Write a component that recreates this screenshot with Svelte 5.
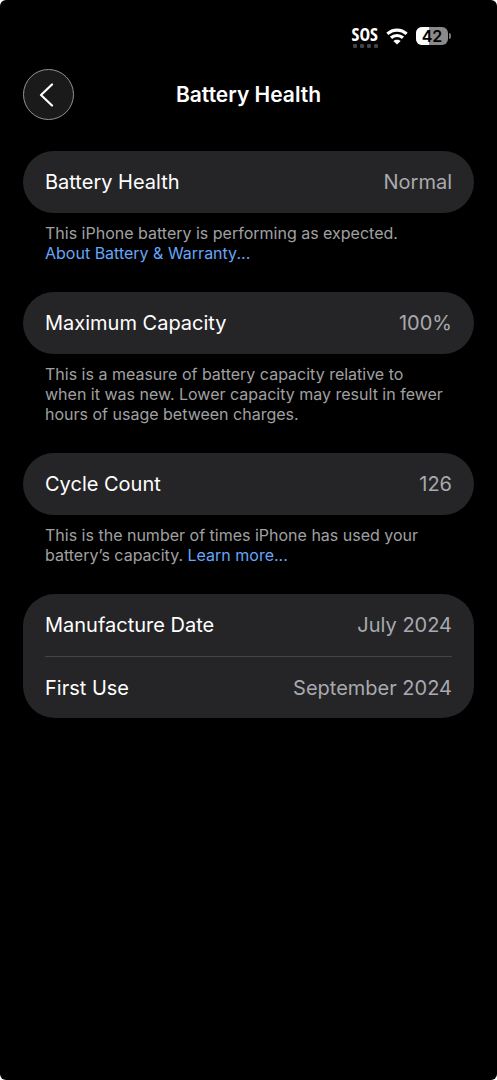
<script>
    let sections = [
        {
            rows: [{ label: "Battery Health", value: "Normal" }],
            note: ["This iPhone battery is performing as expected."],
            link: "About Battery & Warranty...",
            linkOnNewLine: true
        },
        {
            rows: [{ label: "Maximum Capacity", value: "100%" }],
            note: [
                "This is a measure of battery capacity relative to",
                "when it was new. Lower capacity may result in fewer",
                "hours of usage between charges."
            ]
        },
        {
            rows: [{ label: "Cycle Count", value: "126" }],
            note: [
                "This is the number of times iPhone has used your",
                "battery’s capacity."
            ],
            link: "Learn more..."
        },
        {
            rows: [
                { label: "Manufacture Date", value: "July 2024" },
                { label: "First Use", value: "September 2024" }
            ]
        }
    ];

    let batteryLevel = 42;
</script>

<div class="screen">
    <div class="status-bar">
        <div class="sos">
            <span>SOS</span>
            <svg width="26" height="4" viewBox="0 0 26 4" aria-hidden="true">
                {#each [0, 1, 2, 3] as dot}
                    <rect x={1 + dot * 7} y="0" width="4" height="4" rx="1.2" fill="#444" />
                {/each}
            </svg>
        </div>
        <svg class="wifi" width="22" height="17" viewBox="0 0 22 17" aria-label="Wi-Fi">
            <path d="M1.4 5.9C6.8.8 15.2.8 20.6 5.9" />
            <path d="M5 9.8C8.4 6.7 13.6 6.7 17 9.8" />
            <path class="wifi-dot" d="M11 16.6L7.3 13C9.3 11.2 12.7 11.2 14.7 13Z" />
        </svg>
        <div class="battery">
            <div class="battery-body">
                <div class="battery-fill" style="width: {batteryLevel}%"></div>
                <span>{batteryLevel}</span>
            </div>
            <div class="battery-tip"></div>
        </div>
    </div>

    <header>
        <button class="back" aria-label="Back">
            <svg width="16" height="24" viewBox="0 0 16 24">
                <path d="M13 1.5L2 12L13 22.5" />
            </svg>
        </button>
        <h1>Battery Health</h1>
    </header>

    <main>
        {#each sections as section}
            <section>
                <dl class="card">
                    {#each section.rows as row}
                        <div class="row">
                            <dt>{row.label}</dt>
                            <dd>{row.value}</dd>
                        </div>
                    {/each}
                </dl>
                {#if section.note}
                    <p>
                        {#each section.note as line, i}
                            {#if i > 0}<br />{/if}
                            {line}
                        {/each}
                        {#if section.link}
                            {#if section.linkOnNewLine}<br />{/if}
                            <a href="#learn">{section.link}</a>
                        {/if}
                    </p>
                {/if}
            </section>
        {/each}
    </main>
</div>

<style>
    :global(body) {
        background: white;
    }

    .screen {
        box-sizing: border-box;
        min-height: 100vh;
        padding: 24px 23px;
        border-radius: 6px;
        background: black;
        color: white;
        font-family: Inter, "Liberation Sans", sans-serif;
    }

    .status-bar {
        display: flex;
        justify-content: flex-end;
        align-items: center;
        gap: 8px;
        height: 24px;
        padding-right: 23px;
    }

    .sos {
        display: flex;
        flex-direction: column;
        align-items: center;
        font-family: "Open Sans", sans-serif;
        font-size: 18px;
        font-stretch: condensed;
        font-weight: 700;
        line-height: 20px;
    }

    .wifi path {
        fill: none;
        stroke: white;
        stroke-width: 3.2;
    }

    .wifi .wifi-dot {
        fill: white;
        stroke: none;
    }

    .battery {
        display: flex;
        align-items: center;
        gap: 1px;
    }

    .battery-body {
        position: relative;
        width: 32px;
        height: 18px;
        overflow: hidden;
        border-radius: 6px;
        background: #8a8a8a;
        color: black;
        font-size: 16px;
        font-weight: 600;
        line-height: 18px;
        text-align: center;
    }

    .battery-fill {
        position: absolute;
        inset: 0 auto 0 0;
        background: white;
    }

    .battery-body span {
        position: relative;
    }

    .battery-tip {
        width: 2px;
        height: 6px;
        border-radius: 0 2px 2px 0;
        background: #777;
    }

    header {
        display: grid;
        grid-template-columns: 51px 1fr 51px;
        align-items: center;
        margin-top: 21px;
    }

    .back {
        display: flex;
        align-items: center;
        justify-content: center;
        width: 51px;
        height: 51px;
        padding: 0 4px 0 0;
        border: 1px solid #929292;
        border-radius: 50%;
        background: #1a1a1b;
    }

    .back path {
        fill: none;
        stroke: white;
        stroke-width: 2.2;
        stroke-linecap: round;
        stroke-linejoin: round;
    }

    h1 {
        margin: 0;
        font-size: 21px;
        font-weight: 600;
        text-align: center;
    }

    main {
        display: flex;
        flex-direction: column;
        gap: 29px;
        margin-top: 31px;
    }

    .card {
        margin: 0;
        padding: 0 22px;
        border-radius: 32px;
        background: #252527;
    }

    .row {
        display: flex;
        justify-content: space-between;
        align-items: center;
        box-sizing: border-box;
        height: 62px;
        font-size: 20px;
    }

    .row + .row {
        border-top: 1px solid #444446;
    }

    dd {
        margin: 0;
        color: #a9a9ae;
    }

    p {
        margin: 10px 0 0;
        padding: 0 22px;
        color: #a0a0a2;
        font-size: 16px;
        line-height: 20px;
    }

    a {
        color: #67a6f8;
        text-decoration: none;
    }
</style>
